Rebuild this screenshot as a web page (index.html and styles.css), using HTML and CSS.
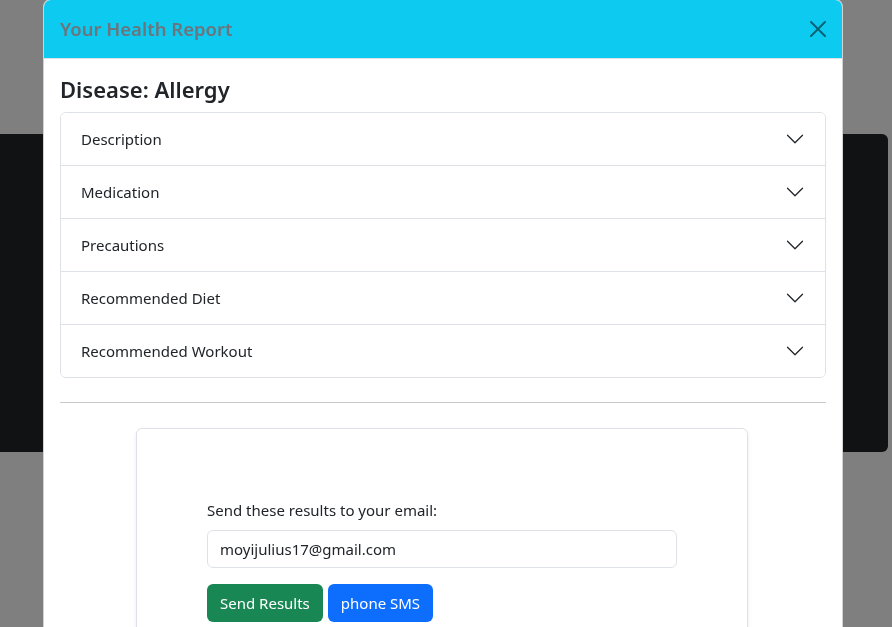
FILE: index.html
```html
<!DOCTYPE html>
<html lang="en">
<head>
<meta charset="utf-8">
<title>Your Health Report</title>
<link rel="stylesheet" href="styles.css">
</head>
<body>
<div class="page">
  <section class="hero"></section>
</div>
<div class="backdrop"></div>
<div class="modal">
  <div class="modal-dialog">
    <div class="modal-header">
      <h5 class="modal-title">Your Health Report</h5>
      <button class="btn-close" type="button" aria-label="Close">
        <svg viewBox="0 0 16 16" width="16" height="16"><path fill="currentColor" d="M.293.293a1 1 0 0 1 1.414 0L8 6.586 14.293.293a1 1 0 1 1 1.414 1.414L9.414 8l6.293 6.293a1 1 0 0 1-1.414 1.414L8 9.414l-6.293 6.293a1 1 0 0 1-1.414-1.414L6.586 8 .293 1.707a1 1 0 0 1 0-1.414z"/></svg>
      </button>
    </div>
    <div class="modal-body">
      <h4 class="disease">Disease: Allergy</h4>
      <div class="accordion">
        <div class="acc-item"><button class="acc-btn" type="button"><span>Description</span><svg class="chev" viewBox="0 0 16 16" width="20" height="20"><path d="M2 5L8 11L14 5"/></svg></button></div>
        <div class="acc-item"><button class="acc-btn" type="button"><span>Medication</span><svg class="chev" viewBox="0 0 16 16" width="20" height="20"><path d="M2 5L8 11L14 5"/></svg></button></div>
        <div class="acc-item"><button class="acc-btn" type="button"><span>Precautions</span><svg class="chev" viewBox="0 0 16 16" width="20" height="20"><path d="M2 5L8 11L14 5"/></svg></button></div>
        <div class="acc-item"><button class="acc-btn" type="button"><span>Recommended Diet</span><svg class="chev" viewBox="0 0 16 16" width="20" height="20"><path d="M2 5L8 11L14 5"/></svg></button></div>
        <div class="acc-item"><button class="acc-btn" type="button"><span>Recommended Workout</span><svg class="chev" viewBox="0 0 16 16" width="20" height="20"><path d="M2 5L8 11L14 5"/></svg></button></div>
      </div>
      <hr class="divider">
      <div class="card">
        <form class="send-form">
          <label class="form-label" for="email">Send these results to your email:</label>
          <input class="form-control" id="email" type="email" value="moyijulius17@gmail.com">
          <div class="actions">
            <button class="btn btn-success" type="button">Send Results</button>
            <button class="btn btn-primary" type="button">phone SMS</button>
          </div>
        </form>
      </div>
    </div>
  </div>
</div>
</body>
</html>
```

FILE: styles.css
```css
* { box-sizing: border-box; }
html, body { margin: 0; padding: 0; }
body {
  background: #fff;
  color: #212529;
  font-family: "Noto Sans", "Liberation Sans", sans-serif;
  font-size: 15px;
  line-height: 1.6;
  overflow: hidden;
  height: 627px;
}
.page { padding-top: 134px; }
.hero {
  width: 888px;
  height: 318px;
  background: #212529;
  border-radius: 0 6px 6px 0;
}
.backdrop {
  position: fixed;
  inset: 0;
  background: rgba(0, 0, 0, 0.5);
}
.modal {
  position: fixed;
  inset: 0;
  overflow: hidden;
}
.modal-dialog {
  width: 800px;
  margin: -1px 0 0 43px;
  background: #fff;
  border: 1px solid rgba(0, 0, 0, 0.175);
  border-radius: 8px;
  overflow: hidden;
}
.modal-header {
  display: flex;
  align-items: center;
  justify-content: space-between;
  height: 59px;
  background: #0dcaf0;
  padding: 0 16px;
  border-bottom: 1px solid #dee2e6;
}
.modal-title {
  margin: 0;
  font-size: 18.5px;
  font-weight: 600;
  line-height: 24px;
  color: #6c757d;
}
.btn-close {
  border: 0;
  background: none;
  padding: 0;
  width: 16px;
  height: 16px;
  color: #000;
  opacity: 0.5;
  display: flex;
}
.modal-body { padding: 16px 16px 40px; }
.disease {
  margin: 0 0 8px;
  font-size: 22px;
  font-weight: 600;
  line-height: 28.8px;
}
.accordion {
  border: 1px solid #dee2e6;
  border-radius: 6px;
  overflow: hidden;
}
.acc-item + .acc-item { border-top: 1px solid #dee2e6; }
.acc-btn {
  display: flex;
  align-items: center;
  justify-content: space-between;
  width: 100%;
  height: 52px;
  border: 0;
  background: #fff;
  padding: 0 20px;
  font: inherit;
  line-height: 24px;
  color: #212529;
  text-align: left;
}
.chev {
  fill: none;
  stroke: #212529;
  stroke-linecap: round;
  stroke-linejoin: round;
}
.divider {
  margin: 24px 0 25px;
  border: 0;
  border-top: 1px solid #c8c9ca;
}
.card {
  width: 612px;
  margin-left: 76px;
  border: 1px solid #dee2e6;
  border-radius: 6px;
  box-shadow: 0 2px 4px rgba(0, 0, 0, 0.075);
  padding: 69px 70px 60px;
}
.send-form { display: flex; flex-direction: column; }
.form-label { margin-bottom: 8px; line-height: 24px; }
.form-control {
  height: 38px;
  padding: 6px 12px;
  border: 1px solid #dee2e6;
  border-radius: 6px;
  font: inherit;
  color: #212529;
}
.actions { display: flex; gap: 5px; margin-top: 16px; }
.btn {
  height: 38px;
  padding: 6px 12px;
  border: 1px solid transparent;
  border-radius: 6px;
  font: inherit;
  color: #fff;
}
.btn-success { background: #198754; }
.btn-primary { background: #0d6efd; }
```
